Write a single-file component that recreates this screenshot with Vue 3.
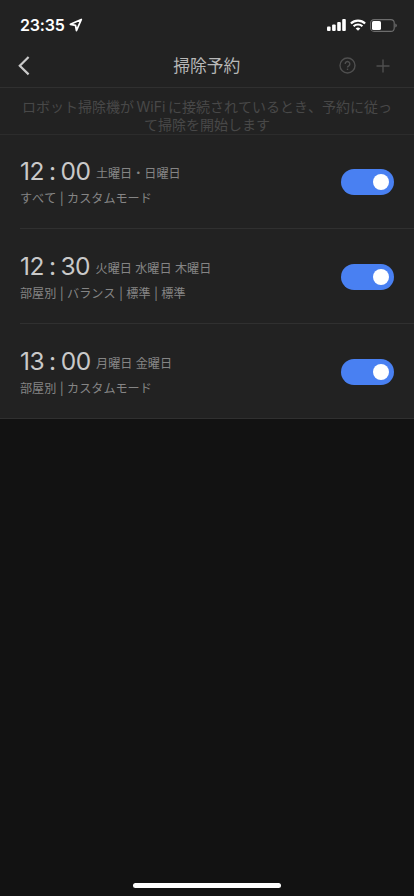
<script setup>
import { reactive } from 'vue'

const schedules = reactive([
  { hour: '12', minute: '00', days: '土曜日・日曜日', detail: 'すべて | カスタムモード', on: true },
  { hour: '12', minute: '30', days: '火曜日 水曜日 木曜日', detail: '部屋別 | バランス | 標準 | 標準', on: true },
  { hour: '13', minute: '00', days: '月曜日 金曜日', detail: '部屋別 | カスタムモード', on: true },
])
</script>

<template>
  <div class="screen">
    <div class="panel">
      <div class="status">
        <div class="clock">
          <span>23:35</span>
          <svg class="location" width="14" height="14" viewBox="0 0 14 14">
            <path d="M12.3 1.5 1.4 6.3l5.1 1.1 1 5.1z" fill="none" stroke="#fff" stroke-width="1.8" stroke-linejoin="round" />
          </svg>
        </div>
        <div class="indicators">
          <svg width="19" height="12" viewBox="0 0 19 12" fill="#fff">
            <rect x="0" y="7.5" width="3.6" height="4.5" rx="1" />
            <rect x="5.1" y="5.4" width="3.6" height="6.6" rx="1" />
            <rect x="10.2" y="3" width="3.6" height="9" rx="1" />
            <rect x="15.2" y="0" width="3.6" height="12" rx="1" />
          </svg>
          <svg width="16" height="12" viewBox="0 0 16 12" fill="none" stroke="#fff" stroke-width="2.2">
            <path d="M.9 4.5a10.2 10.2 0 0 1 14.2 0" />
            <path d="M3.6 7.3a6.3 6.3 0 0 1 8.8 0" />
            <path d="M8 11.8 5.7 9.5a3.3 3.3 0 0 1 4.6 0z" fill="#fff" stroke="none" />
          </svg>
          <svg width="27" height="13" viewBox="0 0 27 13">
            <rect x=".6" y=".6" width="23.6" height="11.8" rx="3.4" fill="none" stroke="#6d6d6d" stroke-width="1.1" />
            <rect x="2" y="2" width="9" height="9" rx="1.6" fill="#fff" />
            <path d="M25.3 4.5q1.5.6 1.5 2t-1.5 2z" fill="#6d6d6d" />
          </svg>
        </div>
      </div>

      <header class="nav">
        <button class="icon-button" aria-label="戻る">
          <svg width="12" height="20" viewBox="0 0 12 20">
            <path d="M10.6 1 1.8 9.7l8.8 8.7" fill="none" stroke="#c9c9c9" stroke-width="2.2" />
          </svg>
        </button>
        <h1>掃除予約</h1>
        <div class="actions">
          <svg width="17" height="17" viewBox="0 0 17 17" fill="none" stroke="#4f4f4f" stroke-width="1.4">
            <circle cx="8.5" cy="8.5" r="7.5" />
            <path d="M6.2 6.9a2.3 2.4 0 1 1 3.6 2c-.9.6-1.3.9-1.3 1.7" />
            <path d="M8.5 11.6v1.4" />
          </svg>
          <svg width="14" height="14" viewBox="0 0 14 14" fill="none" stroke="#4f4f4f" stroke-width="1.4">
            <path d="M7 .5v13M.5 7h13" />
          </svg>
        </div>
      </header>

      <p class="notice">
        <span>ロボット掃除機が<span class="latin">WiFi</span>に接続されているとき、予約に従っ</span>
        <span>て掃除を開始します</span>
      </p>

      <ul class="list">
        <li v-for="(s, i) in schedules" :key="i" class="row">
          <div class="info">
            <div class="headline">
              <span class="time">{{ s.hour }}<span class="colon">:</span>{{ s.minute }}</span>
              <span class="days">{{ s.days }}</span>
            </div>
            <div class="detail">{{ s.detail }}</div>
          </div>
          <button class="toggle" :class="{ on: s.on }" role="switch" :aria-checked="s.on" @click="s.on = !s.on">
            <span class="knob"></span>
          </button>
        </li>
      </ul>
    </div>
    <div class="home"></div>
  </div>
</template>

<style>
body {
  background: #121212;
}
</style>

<style scoped>
.screen {
  box-sizing: border-box;
  width: 414px;
  height: 896px;
  display: flex;
  flex-direction: column;
  justify-content: space-between;
  align-items: center;
  padding-bottom: 8px;
  background: #121212;
  font-family: Inter, "Noto Sans CJK JP", sans-serif;
  font-kerning: none;
  overflow: hidden;
}
.panel {
  width: 100%;
  background: #222;
}
.status {
  height: 44px;
  box-sizing: border-box;
  padding: 6px 17px 0 20px;
  display: flex;
  align-items: center;
  justify-content: space-between;
}
.clock {
  display: flex;
  align-items: center;
  gap: 4px;
  color: #fff;
  font-size: 16px;
  font-weight: 600;
  letter-spacing: -0.2px;
  line-height: 20px;
}
.indicators {
  display: flex;
  align-items: center;
  gap: 4px;
}
.nav {
  height: 44px;
  box-sizing: border-box;
  padding: 0 24.5px 0 18px;
  display: grid;
  grid-template-columns: 1fr auto 1fr;
  align-items: center;
  border-bottom: 1px solid #303030;
}
.icon-button {
  justify-self: start;
  display: flex;
  padding: 0;
  border: 0;
  background: none;
}
h1 {
  margin: 0;
  padding-left: 6px;
  color: #b8b8b8;
  font-size: 16.8px;
  font-weight: 400;
  line-height: 24px;
}
.actions {
  justify-self: end;
  display: flex;
  align-items: center;
  gap: 20px;
}
.notice {
  height: 46.5px;
  box-sizing: border-box;
  margin: 0;
  padding-top: 10px;
  display: flex;
  flex-direction: column;
  align-items: center;
  border-bottom: 1px solid #2c2c2c;
  color: #484848;
  font-size: 14px;
  line-height: 18px;
  white-space: nowrap;
}
.latin {
  margin: 0 2.5px;
}
.list {
  margin: 0;
  padding: 0 0 0 20px;
  list-style: none;
}
.row {
  height: 95px;
  box-sizing: border-box;
  padding-right: 20px;
  display: flex;
  align-items: center;
  justify-content: space-between;
  border-bottom: 1px solid #303030;
}
.row:nth-child(1) {
  height: 94.5px;
}
.row:last-child {
  margin-left: -20px;
  padding-left: 20px;
}
.info {
  padding-top: 1px;
}
.headline {
  display: flex;
  align-items: flex-start;
  gap: 5.5px;
  height: 32px;
}
.time {
  color: #c9c9c9;
  font-size: 24.5px;
  letter-spacing: -0.5px;
  line-height: 32px;
}
.colon {
  margin: 0 5px;
}
.days,
.detail {
  color: #858585;
  font-size: 12.1px;
  line-height: 18px;
  white-space: nowrap;
}
.days {
  padding-top: 10px;
}
.detail {
  margin-top: 3px;
}
.toggle {
  width: 53px;
  height: 26px;
  margin-top: 1px;
  padding: 0 5px;
  display: flex;
  align-items: center;
  border: 0;
  border-radius: 13px;
  background: #555;
}
.toggle.on {
  justify-content: flex-end;
  background: #4980f2;
}
.knob {
  width: 16px;
  height: 16px;
  border-radius: 50%;
  background: #fff;
}
.home {
  width: 148px;
  height: 5px;
  border-radius: 3px;
  background: #fff;
}
</style>
